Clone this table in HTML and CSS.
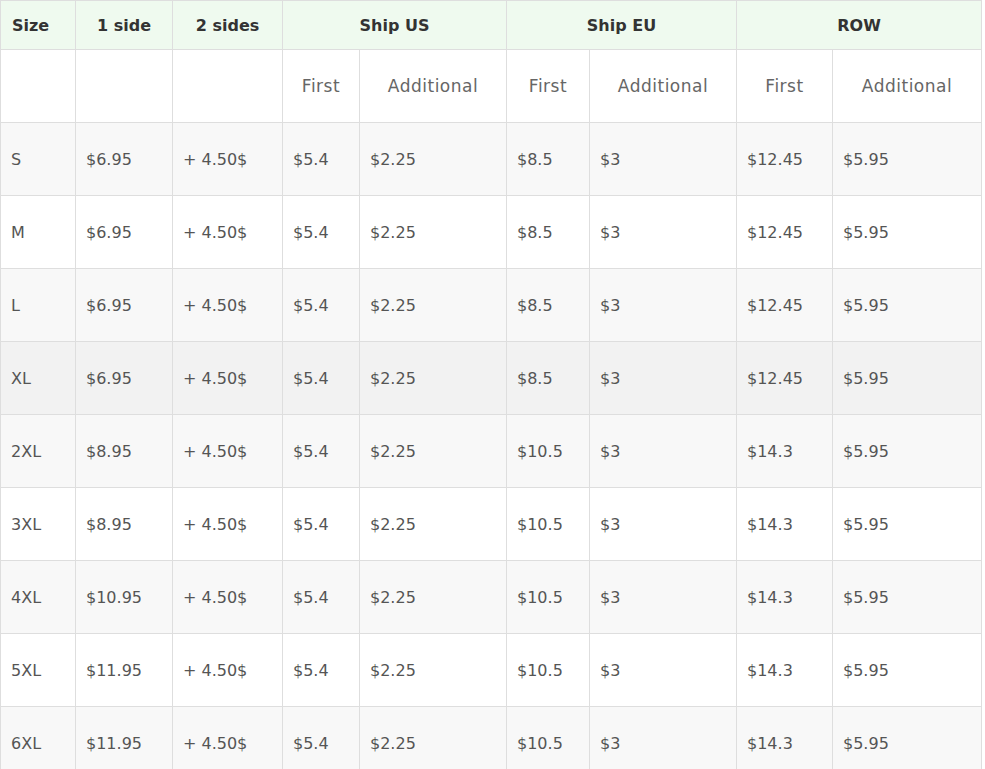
FILE: index.html
```html
<!DOCTYPE html>
<html>
<head>
<meta charset="utf-8">
<link rel="stylesheet" href="styles.css">
</head>
<body>
<table class="price">
  <colgroup>
    <col class="c1"><col class="c2"><col class="c3"><col class="c4"><col class="c5"><col class="c6"><col class="c7"><col class="c8"><col class="c9">
  </colgroup>
  <thead>
    <tr class="head">
      <th class="left">Size</th>
      <th>1 side</th>
      <th>2 sides</th>
      <th colspan="2">Ship US</th>
      <th colspan="2">Ship EU</th>
      <th colspan="2">ROW</th>
    </tr>
  </thead>
  <tbody>
    <tr class="sub">
      <td></td><td></td><td></td>
      <td>First</td><td>Additional</td>
      <td>First</td><td>Additional</td>
      <td>First</td><td>Additional</td>
    </tr>
    <tr class="odd"><td>S</td><td>$6.95</td><td>+ 4.50$</td><td>$5.4</td><td>$2.25</td><td>$8.5</td><td>$3</td><td>$12.45</td><td>$5.95</td></tr>
    <tr><td>M</td><td>$6.95</td><td>+ 4.50$</td><td>$5.4</td><td>$2.25</td><td>$8.5</td><td>$3</td><td>$12.45</td><td>$5.95</td></tr>
    <tr class="odd"><td>L</td><td>$6.95</td><td>+ 4.50$</td><td>$5.4</td><td>$2.25</td><td>$8.5</td><td>$3</td><td>$12.45</td><td>$5.95</td></tr>
    <tr class="hover"><td>XL</td><td>$6.95</td><td>+ 4.50$</td><td>$5.4</td><td>$2.25</td><td>$8.5</td><td>$3</td><td>$12.45</td><td>$5.95</td></tr>
    <tr class="odd"><td>2XL</td><td>$8.95</td><td>+ 4.50$</td><td>$5.4</td><td>$2.25</td><td>$10.5</td><td>$3</td><td>$14.3</td><td>$5.95</td></tr>
    <tr><td>3XL</td><td>$8.95</td><td>+ 4.50$</td><td>$5.4</td><td>$2.25</td><td>$10.5</td><td>$3</td><td>$14.3</td><td>$5.95</td></tr>
    <tr class="odd"><td>4XL</td><td>$10.95</td><td>+ 4.50$</td><td>$5.4</td><td>$2.25</td><td>$10.5</td><td>$3</td><td>$14.3</td><td>$5.95</td></tr>
    <tr><td>5XL</td><td>$11.95</td><td>+ 4.50$</td><td>$5.4</td><td>$2.25</td><td>$10.5</td><td>$3</td><td>$14.3</td><td>$5.95</td></tr>
    <tr class="odd"><td>6XL</td><td>$11.95</td><td>+ 4.50$</td><td>$5.4</td><td>$2.25</td><td>$10.5</td><td>$3</td><td>$14.3</td><td>$5.95</td></tr>
  </tbody>
</table>
</body>
</html>
```
FILE: styles.css
```css
html, body {
  margin: 0;
  padding: 0;
  background: #fff;
}
body {
  font-family: "DejaVu Sans", "Open Sans", sans-serif;
  color: #555;
}
.price {
  border-collapse: collapse;
  table-layout: fixed;
  width: 981px;
}
.c1 { width: 75px; }
.c2 { width: 97px; }
.c3 { width: 110px; }
.c4 { width: 77px; }
.c5 { width: 147px; }
.c6 { width: 83px; }
.c7 { width: 147px; }
.c8 { width: 96px; }
.c9 { width: 149px; }
.price th, .price td {
  border: 1px solid #dedede;
  padding: 0 0 0 10px;
  text-align: left;
  font-size: 16px;
  white-space: nowrap;
}
.price th {
  height: 48px;
  background: #effaef;
  color: #333;
  font-weight: 700;
  font-size: 16px;
  text-align: center;
  padding: 0;
  vertical-align: middle;
}
.price th.left {
  text-align: left;
  padding-left: 11px;
}
.price td {
  height: 72px;
}
.price .sub td {
  text-align: center;
  padding: 0;
  color: #666;
  font-size: 17px;
  letter-spacing: 0.5px;
}
.price tr.odd td { background: #f8f8f8; }
.price tr.hover td { background: #f2f2f2; }
```
